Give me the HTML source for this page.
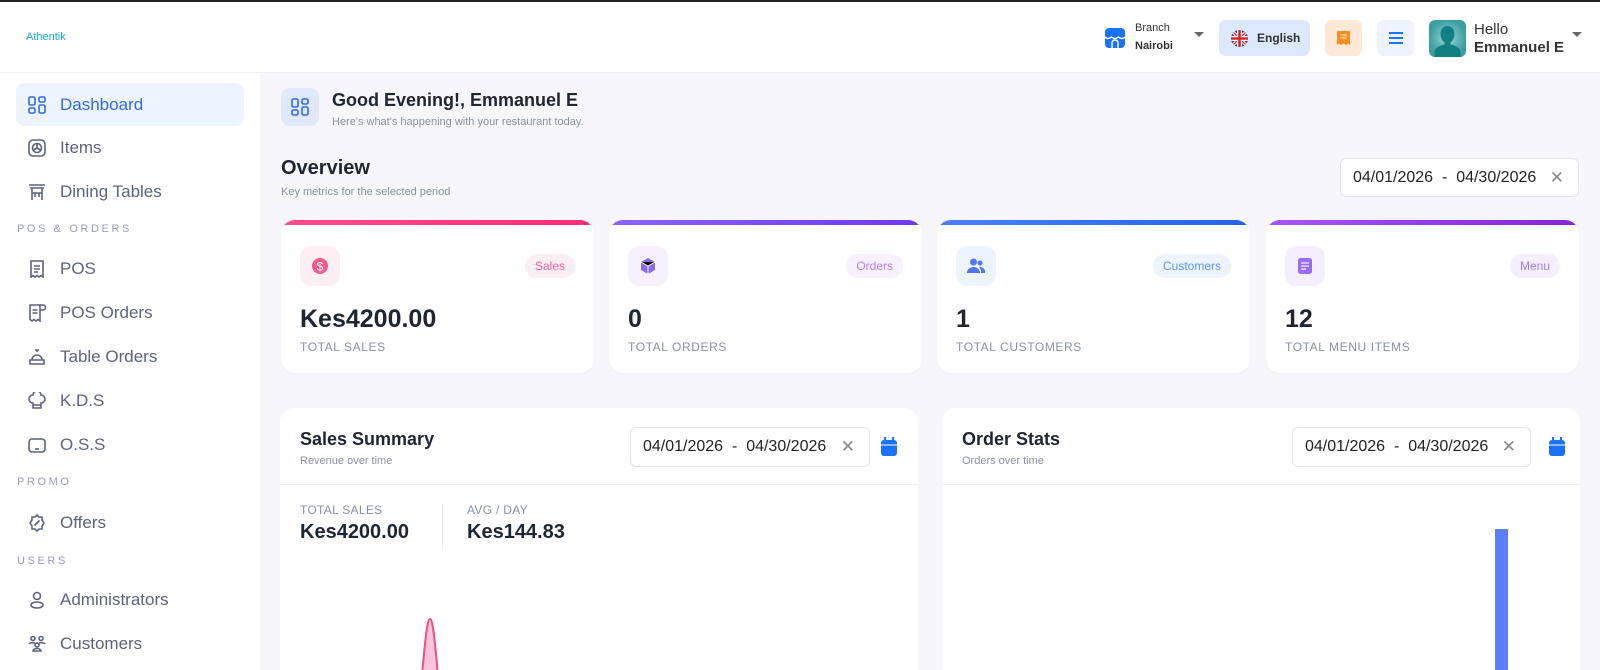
<!DOCTYPE html>
<html><head><meta charset="utf-8">
<style>
*{box-sizing:border-box;margin:0;padding:0}
html{overflow:hidden;width:1600px;height:670px}
body{width:1600px;height:670px;overflow:hidden;background:#f7f7fb;font-family:"Liberation Sans",sans-serif;color:#1e2535;position:relative}
.abs{position:absolute}
.topline{left:0;top:0;width:1600px;height:2px;background:#222}
.header{left:0;top:2px;width:1600px;height:71px;background:#fff;border-bottom:1px solid #f0f0f4}
.side{left:0;top:73px;width:260px;height:597px;background:#fff}
.nav{position:absolute;left:16px;width:228px;height:43px;display:flex;align-items:center;padding-left:12px;font-size:17px;color:#5d6280}
.nav svg{width:18px;height:18px;margin-right:14px;stroke:#5d6280;fill:none;stroke-width:1.6}
.nav.act{background:#eef4ff;border-radius:8px;color:#2f6bea}
.nav.act svg{stroke:#2f6bea}
.sec{position:absolute;left:17px;font-size:11px;letter-spacing:2.6px;color:#9a9eb0}
.card{position:absolute;background:#fff;border-radius:14px;overflow:hidden}
.kpi{top:220px;width:313px;height:153px;box-shadow:0 1px 2px rgba(0,0,0,.03)}
.kpi .bar{position:absolute;left:0;top:0;right:0;height:5px}
.kpi .ic{position:absolute;left:19px;top:26px;width:40px;height:40px;border-radius:11px;display:flex;align-items:center;justify-content:center}
.kpi .pill{position:absolute;right:19px;top:34px;height:24px;border-radius:12px;padding:0 10px;font-size:12px;line-height:24px}
.kpi .val{position:absolute;left:19px;top:85px;font-size:25px;font-weight:bold;color:#1e2535}
.kpi .lab{position:absolute;left:19px;top:120px;font-size:12px;letter-spacing:.6px;color:#8a90a4}
.date{position:absolute;background:#fff;border:1px solid #e3e4ea;border-radius:6px;font-size:16px;color:#222;display:flex;align-items:center;padding-left:12px}
.date .x{position:absolute;right:14px;color:#888;font-size:17px}
</style></head><body>
<div class="abs topline"></div>
<div class="abs header">
  <div class="abs" style="left:26px;top:29px;font-size:11px;color:#1aa6f0">Athentik</div>
  <svg class="abs" style="left:1105px;top:26px" width="20" height="20" viewBox="0 0 20 20"><rect x="0" y="0" width="20" height="20" rx="4" fill="#1a73f5"/><path d="M0 9 Q3 12 6.5 9 Q10 12 13.5 9 Q17 12 20 9" stroke="#fff" stroke-width="1.4" fill="none"/><path d="M7 20 V15 a3 3 0 0 1 6 0 V20" stroke="#fff" stroke-width="1.4" fill="none"/></svg>
  <div class="abs" style="left:1135px;top:20px;font-size:11px;color:#333">Branch</div>
  <div class="abs" style="left:1135px;top:38px;font-size:11px;font-weight:bold;color:#333">Nairobi</div>
  <div class="abs" style="left:1194px;top:30px;border:5px solid transparent;border-top:5px solid #666"></div>
  <div class="abs" style="left:1219px;top:18px;width:91px;height:36px;background:#dbe8fd;border-radius:7px"></div>
  <svg class="abs" style="left:1231px;top:28px" width="17" height="17" viewBox="0 0 20 20"><clipPath id="c"><circle cx="10" cy="10" r="10"/></clipPath><g clip-path="url(#c)"><rect width="20" height="20" fill="#1f3c8f"/><path d="M0 0L20 20M20 0L0 20" stroke="#fff" stroke-width="4"/><path d="M0 0L20 20M20 0L0 20" stroke="#d8232a" stroke-width="1.5"/><path d="M10 0V20M0 10H20" stroke="#fff" stroke-width="6"/><path d="M10 0V20M0 10H20" stroke="#d8232a" stroke-width="3"/></g></svg>
  <div class="abs" style="left:1257px;top:29px;font-size:12px;font-weight:bold;color:#333">English</div>
  <div class="abs" style="left:1325px;top:18px;width:37px;height:36px;background:#ffe9d6;border-radius:7px"></div>
  <svg class="abs" style="left:1337px;top:29px" width="13" height="14" viewBox="0 0 13 14"><path d="M1 0h11a1 1 0 0 1 1 1v13l-2-1.5-2 1.5-2.5-1.5-2.5 1.5-2-1.5-2 1.5V1a1 1 0 0 1 1-1z" fill="#fb8c1e"/><path d="M3.5 4h6M3.5 7h6" stroke="#ffe9d6" stroke-width="1.2"/></svg>
  <div class="abs" style="left:1377px;top:18px;width:37px;height:36px;background:#eef4ff;border-radius:7px"></div>
  <svg class="abs" style="left:1389px;top:30px" width="14" height="12" viewBox="0 0 14 12"><path d="M0 1h14M0 6h14M0 11h14" stroke="#1a73f5" stroke-width="2"/></svg>
  <svg class="abs" style="left:1429px;top:18px" width="37" height="37" viewBox="0 0 37 37"><defs><radialGradient id="g"><stop offset="0" stop-color="#9fd6d6"/><stop offset="1" stop-color="#3c9ea0"/></radialGradient></defs><rect width="37" height="37" rx="6" fill="url(#g)"/><path d="M18.5 6c4.5 0 7 3.5 7 8 0 4-2 7-4 8.5v2c5 1 10 3 10 8V37H5.5v-4.5c0-5 5-7 10-8v-2c-2-1.5-4-4.5-4-8.5 0-4.5 2.5-8 7-8z" fill="#127f82"/></svg>
  <div class="abs" style="left:1474px;top:19px;font-size:15px;color:#333">Hello</div>
  <div class="abs" style="left:1474px;top:37px;font-size:15px;font-weight:bold;color:#333">Emmanuel E</div>
  <div class="abs" style="left:1572px;top:30px;border:5px solid transparent;border-top:5px solid #666"></div>
</div>

<div class="abs side">
  <div class="nav act" style="top:10px"><svg viewBox="0 0 18 18"><rect x="1" y="1" width="6" height="8" rx="1.5"/><rect x="11" y="1" width="6" height="5" rx="1.5"/><rect x="1" y="12" width="6" height="5" rx="1.5"/><rect x="11" y="9" width="6" height="8" rx="1.5"/></svg>Dashboard</div>
  <div class="nav" style="top:53px"><svg viewBox="0 0 18 18"><rect x="1" y="1" width="16" height="16" rx="4"/><circle cx="9" cy="9" r="4.5"/><path d="M9 9V5M9 9l3.5 2M9 9l-3.5 2"/></svg>Items</div>
  <div class="nav" style="top:97px"><svg viewBox="0 0 18 18"><path d="M1 2h16M2 5h14M4 5v12M14 5v12M4 10h10M7 10v4M11 10v4"/></svg>Dining Tables</div>
  <div class="sec" style="top:150px">POS &amp; ORDERS</div>
  <div class="nav" style="top:174px"><svg viewBox="0 0 18 18"><path d="M3 1h12v16l-2-1.5-2 1.5-2-1.5-2 1.5-2-1.5-2 1.5z"/><path d="M6 6h6M6 9h6M6 12h4"/></svg>POS</div>
  <div class="nav" style="top:218px"><svg viewBox="0 0 18 18"><path d="M2 1h10v16l-2-1.5-2 1.5-2-1.5-2 1.5-2-1.5z"/><path d="M12 1h3a2 2 0 0 1 0 5h-3M4.5 6h5M4.5 9h5"/></svg>POS Orders</div>
  <div class="nav" style="top:262px"><svg viewBox="0 0 18 18"><path d="M9 2v2M4 12a5 5 0 0 1 10 0M2 12h14v4H2zM7 2h4"/></svg>Table Orders</div>
  <div class="nav" style="top:306px"><svg viewBox="0 0 18 18"><path d="M5 11a4 4 0 0 1 0-8 4 4 0 0 1 8 0 4 4 0 0 1 0 8v5H5zM5 13h8"/></svg>K.D.S</div>
  <div class="nav" style="top:350px"><svg viewBox="0 0 18 18"><rect x="1" y="3" width="16" height="13" rx="3"/><path d="M7 13h4"/></svg>O.S.S</div>
  <div class="sec" style="top:403px">PROMO</div>
  <div class="nav" style="top:428px"><svg viewBox="0 0 18 18"><path d="M9 1l2 2h3v3l2 3-2 3v3h-3l-2 2-2-2H4v-3l-2-3 2-3V3h3z"/><path d="M6.5 11.5l5-5M7 7h.1M11 11h.1"/></svg>Offers</div>
  <div class="sec" style="top:482px">USERS</div>
  <div class="nav" style="top:505px"><svg viewBox="0 0 18 18"><circle cx="9" cy="5" r="3.5"/><ellipse cx="9" cy="14" rx="6" ry="3"/></svg>Administrators</div>
  <div class="nav" style="top:549px"><svg viewBox="0 0 18 18"><circle cx="5" cy="3.5" r="2"/><circle cx="13" cy="3.5" r="2"/><circle cx="9" cy="10" r="2"/><path d="M1 9a4 2 0 0 1 6-1M17 9a4 2 0 0 0-6-1M5 16a4 2.5 0 0 1 8 0z"/></svg>Customers</div>
</div>

<div class="abs" style="left:281px;top:88px;width:38px;height:38px;border-radius:9px;background:#dfe9fb;display:flex;align-items:center;justify-content:center"><svg width="18" height="18" viewBox="0 0 18 18" fill="none" stroke="#2f6bea" stroke-width="1.6"><rect x="1" y="1" width="6" height="8" rx="1.5"/><rect x="11" y="1" width="6" height="5" rx="1.5"/><rect x="1" y="12" width="6" height="5" rx="1.5"/><rect x="11" y="9" width="6" height="8" rx="1.5"/></svg></div>
<div class="abs" style="left:332px;top:90px;font-size:18px;font-weight:bold">Good Evening!, Emmanuel E</div>
<div class="abs" style="left:332px;top:116px;font-size:11px;color:#8a90a4">Here's what's happening with your restaurant today.</div>
<div class="abs" style="left:281px;top:157px;font-size:20px;font-weight:bold">Overview</div>
<div class="abs" style="left:281px;top:186px;font-size:11px;color:#8a90a4">Key metrics for the selected period</div>
<div class="date" style="left:1340px;top:158px;width:239px;height:39px">04/01/2026 &nbsp;-&nbsp; 04/30/2026<span class="x">✕</span></div>

<div class="card kpi" style="left:281px"><div class="bar" style="background:linear-gradient(90deg,#ff4d8d,#ff2a78)"></div>
<div class="ic" style="background:#fdeef4"><svg width="18" height="18" viewBox="0 0 18 18"><circle cx="9" cy="9" r="8" fill="#f5578e"/><text x="9" y="13.5" font-size="12" text-anchor="middle" fill="#fff" font-family="Liberation Sans">$</text></svg></div>
<div class="pill" style="background:#fdeef4;color:#f0609b">Sales</div><div class="val">Kes4200.00</div><div class="lab">TOTAL SALES</div></div>

<div class="card kpi" style="left:609px"><div class="bar" style="background:linear-gradient(90deg,#8a63f7,#6e37ee)"></div>
<div class="ic" style="background:#f7f1fe"><svg width="18" height="18" viewBox="0 0 18 18"><path d="M9 1l7 4v8l-7 4-7-4V5z" fill="#8b6cf1"/><path d="M2 5l7 4 7-4M9 9v8" stroke="#f7f1fe" stroke-width="1"/></svg></div>
<div class="pill" style="background:#f7f1fe;color:#b77cf3">Orders</div><div class="val">0</div><div class="lab">TOTAL ORDERS</div></div>

<div class="card kpi" style="left:937px"><div class="bar" style="background:linear-gradient(90deg,#4d7ef7,#2563eb)"></div>
<div class="ic" style="background:#edf4ff"><svg width="18" height="18" viewBox="0 0 18 18" fill="#4d78ef"><circle cx="6.5" cy="5" r="3.5"/><path d="M0 16a6.5 6 0 0 1 13 0z"/><circle cx="13" cy="6" r="2.5"/><path d="M12 10a5 5 0 0 1 6 6h-4a7 7 0 0 0-2-6z"/></svg></div>
<div class="pill" style="background:#edf4ff;color:#5b95f3">Customers</div><div class="val">1</div><div class="lab">TOTAL CUSTOMERS</div></div>

<div class="card kpi" style="left:1266px"><div class="bar" style="background:linear-gradient(90deg,#a855f7,#8424d6)"></div>
<div class="ic" style="background:#f4eefe"><svg width="18" height="18" viewBox="0 0 18 18"><rect x="2" y="1" width="14" height="16" rx="2.5" fill="#9b6cf0"/><path d="M5 6h8M5 9h8M5 12h5" stroke="#f4eefe" stroke-width="1.2"/></svg></div>
<div class="pill" style="background:#f4eefe;color:#a27ef0">Menu</div><div class="val">12</div><div class="lab">TOTAL MENU ITEMS</div></div>

<div class="card" style="left:280px;top:408px;width:638px;height:262px;border-radius:14px 14px 0 0">
  <div class="abs" style="left:20px;top:21px;font-size:18px;font-weight:bold">Sales Summary</div>
  <div class="abs" style="left:20px;top:47px;font-size:11px;color:#8a90a4">Revenue over time</div>
  <div class="date" style="left:350px;top:19px;width:240px;height:40px">04/01/2026 &nbsp;-&nbsp; 04/30/2026<span class="x">✕</span></div>
  <svg class="abs" style="left:601px;top:29px" width="16" height="19" viewBox="0 0 16 19"><rect x="0" y="3" width="16" height="16" rx="3" fill="#1a73f5"/><path d="M4 0v5M12 0v5" stroke="#1a73f5" stroke-width="2"/><path d="M0 8h16" stroke="#fff" stroke-width="1"/></svg>
  <div class="abs" style="left:0;top:76px;width:638px;height:1px;background:#eef0f4"></div>
  <div class="abs" style="left:20px;top:95px;font-size:12px;color:#8a90a4;letter-spacing:.3px">TOTAL SALES</div>
  <div class="abs" style="left:20px;top:113px;font-size:20px;font-weight:bold">Kes4200.00</div>
  <div class="abs" style="left:162px;top:96px;width:1px;height:46px;background:#eef0f4"></div>
  <div class="abs" style="left:187px;top:95px;font-size:12px;color:#8a90a4;letter-spacing:.3px">AVG / DAY</div>
  <div class="abs" style="left:187px;top:113px;font-size:20px;font-weight:bold">Kes144.83</div>
  <svg class="abs" style="left:130px;top:205px" width="40" height="60" viewBox="0 0 40 60"><path d="M12 62 C15 30 17 6 20 6 C23 6 25 30 28 62Z" fill="#fbc4da" stroke="#f34c8b" stroke-width="2"/></svg>
</div>

<div class="card" style="left:942px;top:408px;width:638px;height:262px;border-radius:14px 14px 0 0">
  <div class="abs" style="left:20px;top:21px;font-size:18px;font-weight:bold">Order Stats</div>
  <div class="abs" style="left:20px;top:47px;font-size:11px;color:#8a90a4">Orders over time</div>
  <div class="date" style="left:350px;top:19px;width:239px;height:40px">04/01/2026 &nbsp;-&nbsp; 04/30/2026<span class="x">✕</span></div>
  <svg class="abs" style="left:607px;top:29px" width="16" height="19" viewBox="0 0 16 19"><rect x="0" y="3" width="16" height="16" rx="3" fill="#1a73f5"/><path d="M4 0v5M12 0v5" stroke="#1a73f5" stroke-width="2"/><path d="M0 8h16" stroke="#fff" stroke-width="1"/></svg>
  <div class="abs" style="left:0;top:76px;width:638px;height:1px;background:#eef0f4"></div>
  <div class="abs" style="left:553px;top:121px;width:13px;height:150px;background:#5b7ffb"></div>
</div>
</body></html>
